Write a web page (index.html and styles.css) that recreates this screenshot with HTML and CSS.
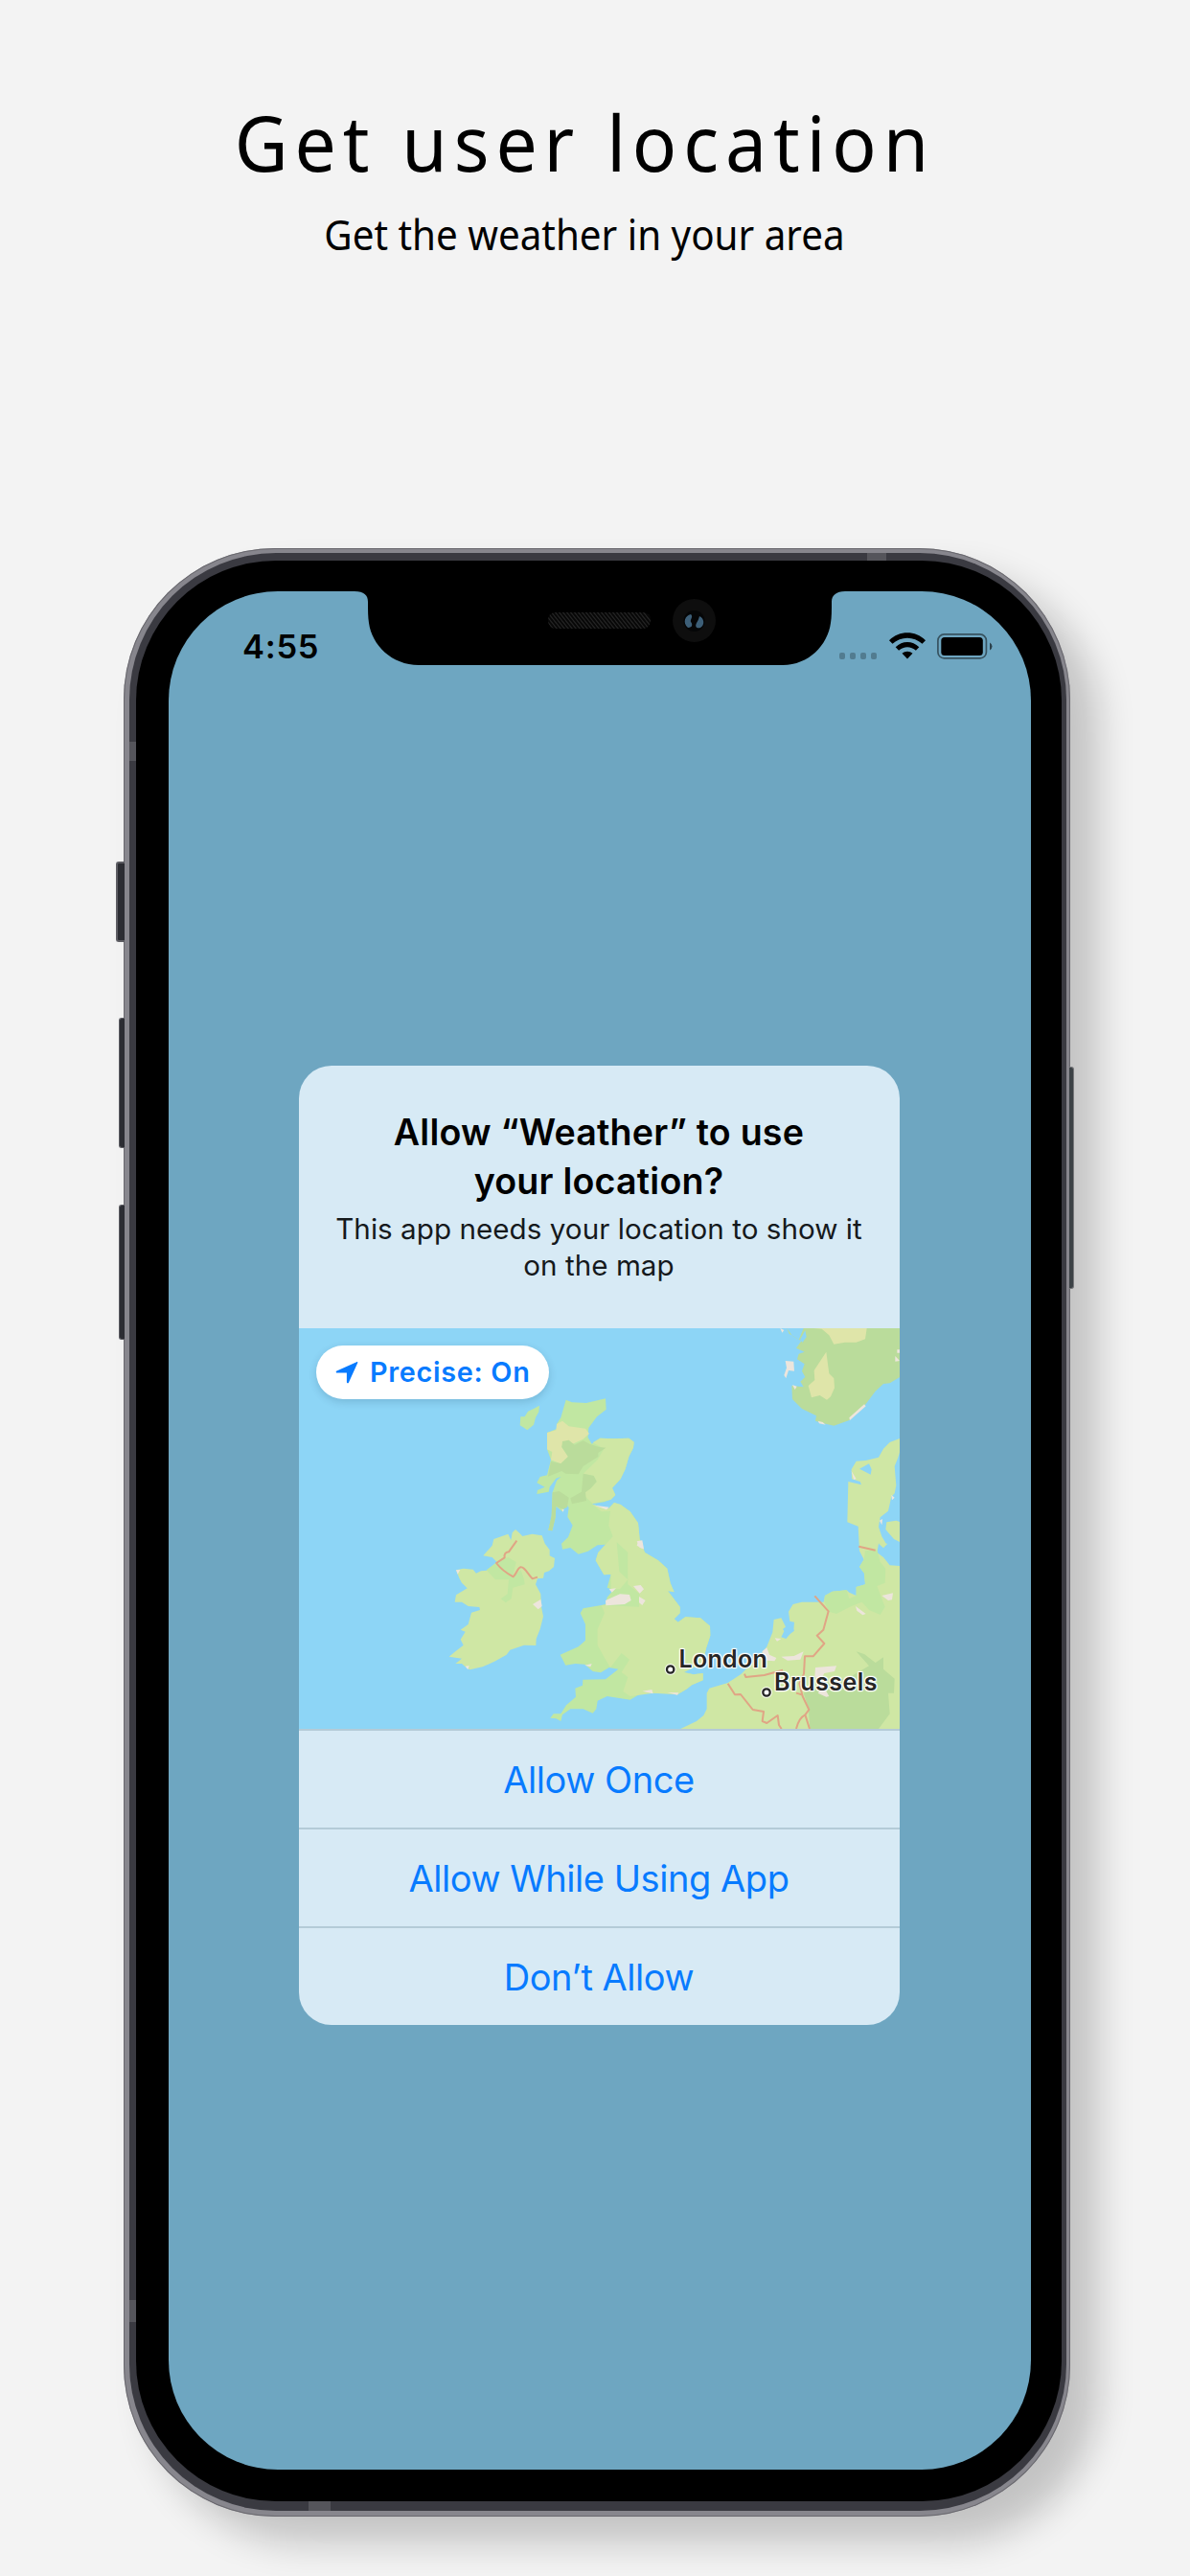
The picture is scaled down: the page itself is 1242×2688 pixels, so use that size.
FILE: index.html
```html
<!DOCTYPE html>
<html lang="en">
<head>
<meta charset="utf-8">
<title>Get user location</title>
<link rel="stylesheet" href="styles.css">
</head>
<body>
<header class="intro">
  <h1 class="intro-title">Get user location</h1>
  <p class="intro-sub">Get the weather in your area</p>
</header>
<main class="phone">
  <span class="key key-mute"></span>
  <span class="key key-up"></span>
  <span class="key key-down"></span>
  <span class="key key-power"></span>
  <div class="rail">
    <span class="band band-top"></span>
    <span class="band band-left-top"></span>
    <span class="band band-left-bottom"></span>
    <span class="band band-bottom"></span>
    <div class="bezel">
      <div class="screen">
        <svg class="notch" viewBox="0 0 500 79" aria-hidden="true">
          <defs>
            <pattern id="mesh" width="4" height="5" patternUnits="userSpaceOnUse">
              <path d="M0 0L4 5M-1 3.7L1 6.2M3 -1.2L5 1.2" stroke="#242424" stroke-width="1.1"/>
            </pattern>
          </defs>
          <path d="M0 -1V0C10 0 14 4 14 11C14 20 14 27 15 33C18 56 39 77 67 77H447C474 77 494 56 497 33C498 27 498 20 498 11C498 4 503 0 512 0V-1Z" fill="#000"/>
          <rect x="202" y="22" width="107" height="17" rx="8" fill="#070707"/>
          <rect x="202" y="22" width="107" height="17" rx="8" fill="url(#mesh)"/>
          <circle cx="354.500" cy="30.500" r="22.500" fill="#0e0e0e"/>
          <circle cx="354.500" cy="31" r="11" fill="#050607"/>
          <path d="M351 24C345 25 342 33 348 38C353 38 353 34 351 32C350 29 354 27 351 24Z" fill="#3d5f78"/>
          <path d="M360 26C365 28 366 35 361 38C357 39 355 37 357 33C359 30 359 29 360 26Z" fill="#3d5f78"/>
        </svg>
        <div class="status">
          <span class="clock">4:55</span>
          <div class="status-icons">
            <span class="dots"><i></i><i></i><i></i><i></i></span>
            <svg class="wifi" viewBox="0 0 38 28" aria-hidden="true">
              <path d="M19 27.500L13.500 21.700C16.500 19 21.500 19 24.500 21.700Z"/>
              <path d="M6.700 15.200L10.100 18.700C15.200 14 22.800 14 27.900 18.700L31.300 15.200C24.300 8.300 13.700 8.300 6.700 15.200Z"/>
              <path d="M0 8.300L3.500 11.800C12.300 3.600 25.700 3.600 34.500 11.800L38 8.300C27.300 -2.300 10.700 -2.300 0 8.300Z"/>
            </svg>
            <svg class="battery" viewBox="0 0 58 27" aria-hidden="true">
              <rect x="0.900" y="0.900" width="50.500" height="25" rx="6.500" fill="none" stroke="#000" stroke-opacity=".5" stroke-width="1.700"/>
              <rect x="4.300" y="4" width="43.500" height="19" rx="3.500"/>
              <path d="M55 9.500Q57.500 11 57.500 13.500T55 17.500Z" fill-opacity=".6"/>
            </svg>
          </div>
        </div>
        <section class="dialog">
          <div class="message">
            <h2 class="question">Allow “Weather” to use<br>your location?</h2>
            <p class="reason">This app needs your location to show it<br>on the map</p>
          </div>
          <div class="map">
            <svg class="map-art" viewBox="35 48 1881 1254" preserveAspectRatio="none" aria-hidden="true">
              <!-- Ireland and Outer Hebrides -->
              <g>
                <path fill="#c1e7a2" d="M788 290L786 310L776 328L770 350L750 367L737 358L727 352L729 325L742 325L752 308L770 300Z"/>
                <path fill="#cfe7a4" d="M713 678L724 688L735 699L765 692L796 697L805 722L820 742L820 760L836 768L833 795L818 808L803 813L800 830L782 832L776 850L792 880L794 920L800 950L790 990L778 1020L777 1041L740 1040L696 1055L685 1070L650 1090L610 1108L570 1117L556 1108L545 1098L525 1098L545 1082L505 1076L522 1062L550 1040L541 1022L556 998L541 992L565 975L575 938L602 930L600 921L565 918L545 905L523 905L527 883L562 862L545 845L537 830L527 805L550 800L580 803L590 815L605 808L625 806L655 780L640 765L612 760L640 728L645 708L690 692L699 712L703 688Z"/>
                <path fill="#c1e7a2" d="M655 780L690 765L715 780L705 822L730 805L740 835L742 850L705 860L700 895L682 907L667 895L688 880L692 835L650 835L622 805Z"/>
                <path fill="#ede5dc" d="M527 805L540 804L532 818ZM767 912L792 897L796 918L784 928ZM556 1106L568 1104L564 1117Z"/>
                <path fill="none" stroke="#e0a585" stroke-width="6" stroke-linejoin="round" d="M717 713L692 748Q676 750 679 766L653 783Q672 808 706 826C718 815 720 795 731 796C742 796 750 815 766 832L782 827"/>
              </g>
              <!-- Great Britain -->
              <g transform="translate(720 210)">
                <path fill="#c1e7a2" d="M151 62L170 70L215 72L275 58L277 92L248 115L222 150L220 180L232 200L258 182L300 184L348 182L364 194L362 212L348 240L337 278L322 310L296 338L306 360L292 374L270 382L232 388L262 400L285 402L302 384L322 390L352 412L377 448L382 498L398 540L440 565L468 590L478 636L490 664L470 660L508 710L508 730L490 748L502 758L525 742L572 745L602 770L603 800L590 840L580 885L520 915L550 922L580 918L580 940L545 955L530 967L500 985L470 978L425 980L400 973L352 1001L280 990L250 1004L246 1030L235 1043L205 1030L165 1030L140 1048L135 1068L120 1060L102 1058L112 1045L135 1045L152 1018L182 992L180 965L203 956L204 938L275 937L315 905L286 900L260 916L235 912L210 890L180 888L150 893L133 860L190 835L212 815L212 765L196 730L205 715L262 705L275 702L280 680L300 657L280 650L292 608L270 610L244 565L252 540L275 515L250 517L220 536L190 545L165 525L140 530L137 512L158 492L172 455L156 428L160 400L152 388L140 412L120 395L118 430L108 472L96 470L106 425L109 352L122 315L135 303L120 308L100 335L97 350L60 357L62 345L85 335L60 322L70 303L92 298L104 250L92 217L92 165L130 150L122 138L135 118Z"/>
                <path fill="#cfe7a4" d="M258 182L300 184L348 182L364 194L362 212L348 240L337 278L322 310L296 338L306 360L292 374L235 387L200 355L228 340L247 318L238 300L205 293L250 250L270 215L235 196ZM232 388L262 400L285 402L302 384L322 390L352 412L377 448L382 498L398 540L440 565L468 590L478 636L490 664L470 660L508 710L508 730L490 748L502 758L525 742L572 745L602 770L603 800L590 840L580 885L520 915L550 922L580 918L580 940L545 955L530 967L500 985L425 980L352 990L330 975L345 930L325 915L350 875L325 855L290 900L275 875L250 830L250 780L272 730L262 705L380 710L382 670L345 640L345 540L310 508L318 600L345 625L320 655L292 655L292 608L270 610L244 565L252 540L298 490L285 455L290 410L262 412Z"/>
                <path fill="#dfe5a9" d="M122 138L140 128L160 145L212 152L224 168L205 185L172 200L142 195L138 210L158 240L135 262L104 250L108 225L92 217L92 165L120 157Z"/>
                <path fill="#badc9b" d="M140 192L160 188L178 203L205 190L225 200L255 210L276 212L252 228L252 240L205 270L190 295L150 293L138 285L95 302L104 255L135 262L158 240L138 210ZM205 293L238 300L247 318L228 340L212 352L215 378L170 388L165 370L200 350ZM109 352L130 348L160 368L155 398L140 405L120 395L118 430L108 472L96 470L106 425Z"/>
                <path fill="#ede5dc" d="M275 690L320 670L350 672L355 690L335 702L276 706ZM286 655L308 652L295 665ZM362 645L385 642L395 655L382 668ZM380 678L400 690L390 705L380 697ZM378 505L395 530L373 518ZM240 392L286 398L278 406ZM390 974L420 969L424 982ZM210 893L232 888L228 898ZM468 978L504 979L500 986ZM138 404L142 414L145 405Z"/>
              </g>
              <!-- Norway, Denmark, Low Countries, France and Germany -->
              <g transform="translate(960 0)">
                <path fill="#badc9b" d="M603 48L620 72L640 84L655 48H958V200L925 220L905 222L880 245L845 292L800 335L750 353L715 345L692 338L695 322L650 300L620 270L618 228L655 232L645 215L660 200L650 182L658 160L635 145L640 128L658 122L632 110L648 88L610 65Z"/>
                <path fill="#8dd5f6" d="M644 84L660 55L664 75L652 92Z"/>
                <path fill="#dfe5a9" d="M688 48H853L848 82L820 92L785 92L750 98L735 70L712 50ZM726 122L735 190L750 205L752 235L740 262L728 272L706 258L680 265L670 228L690 210L688 180Z"/>
                <path fill="#ede5dc" d="M598 150L624 152L626 182L608 180L600 205L594 195L602 172ZM582 48L594 54L588 62ZM620 225L634 230L628 240ZM845 286L850 292L800 336L798 328ZM700 338L715 342L724 350L704 346ZM948 115H956V125H948ZM942 135L956 150L942 152Z"/>
                <path fill="#cfe7a4" d="M958 392L925 405L905 425L890 452L850 462L820 464L805 490L806 520L832 528L836 538L795 528L792 655L826 668L830 745L844 772L830 795L845 815L848 850L820 858L820 885L798 875L790 868L745 872L722 885L718 905L650 905L622 912L608 935L612 965L626 968L624 992L600 1020L585 1015L600 985L585 955L562 960L558 1000L540 1045L522 1068L460 1130L418 1158L360 1175L352 1190L352 1240L342 1260L320 1278L270 1302H958V792L925 790L905 765L885 750L890 722L915 725L900 700L890 670L895 640L920 620L930 575L940 565L945 540L940 480L950 455L958 430Z"/>
                <path fill="#c1e7a2" d="M848 745L885 742L895 780L912 800L910 845L885 855L910 920L895 945L860 930L838 905L820 912L800 920L758 942L735 935L720 905L722 885L745 872L790 868L798 895L820 885L820 858L848 850L845 815L830 795L844 772Z"/>
                <path fill="#badc9b" d="M820 1060L845 1068L880 1095L905 1078L905 1115L940 1145L938 1190H920L925 1255L890 1302H675L670 1235L655 1190L720 1160L800 1140L860 1105Z"/>
                <path fill="#8dd5f6" d="M830 488L860 472L868 490L865 506L842 494ZM590 990L615 970L626 995L605 1010ZM925 620L958 570V640L930 648L915 655L914 690L930 705L905 692L902 660ZM940 650L958 640V790L925 788L915 745L900 735L945 728L920 705Z"/>
                <path fill="#cfe7a4" d="M915 655L945 650L958 655V718L938 708L912 678ZM890 722L918 722L905 736Z"/>
                <path fill="#ede5dc" d="M692 1110L758 1105L752 1122L720 1128L708 1150L690 1140ZM900 885L935 877L932 898L920 900ZM818 918L850 942L840 946L822 932ZM525 1060L540 1048L548 1070L570 1080L564 1090L540 1088ZM585 1076L625 1074L655 1060L645 1085L605 1088ZM805 495L820 520L812 522ZM930 570L940 578L932 586ZM893 650L902 645L900 664ZM700 1190L718 1170L735 1200L726 1202ZM565 1018L585 1020L572 1028ZM133 715L150 712L155 738L142 735Z"/>
                <g fill="none" stroke="#e0a585" stroke-width="6" stroke-linejoin="round">
                  <path d="M690 886L733 934L717 992L697 1010L720 1035L685 1075H659L656 1130L642 1160L652 1200L672 1242L660 1258L674 1302M632 1190L652 1196M660 1258Q640 1268 632 1302M470 1130L474 1140L532 1134L590 1118M418 1160L440 1195L458 1194L496 1242L530 1248L526 1278L540 1284L574 1260L578 1290L586 1302M828 731L880 743"/>
                </g>
                <g fill="none" stroke="#fff" stroke-opacity=".8" stroke-width="12">
                  <circle cx="238" cy="1116" r="12"/>
                  <circle cx="539" cy="1188" r="12"/>
                </g>
                <g fill="#fff" stroke="#262626" stroke-width="7">
                  <circle cx="238" cy="1116" r="11"/>
                  <circle cx="539" cy="1188" r="11"/>
                </g>
              </g>
            </svg>
            <span class="precise">
              <svg class="arrow" viewBox="0 0 24 24" aria-hidden="true"><path d="M22.200 1.200C23 .8 23.600 1.400 23.200 2.300L14 22.500C13.400 23.800 11.900 23.500 11.900 22.100V12.600H2C.5 12.500 .2 11 1.500 10.400Z"/></svg>
              <span class="precise-text">Precise: On</span>
            </span>
            <span class="city city-london">London</span>
            <span class="city city-brussels">Brussels</span>
          </div>
          <button class="choice">Allow Once</button>
          <button class="choice">Allow While Using App</button>
          <button class="choice">Don’t Allow</button>
        </section>
      </div>
    </div>
  </div>
</main>
</body>
</html>
```
FILE: styles.css
```css
* { box-sizing: border-box; }

body {
  margin: 0;
  width: 1242px;
  height: 2688px;
  overflow: hidden;
  background: #f3f3f3;
  color: #000;
  font-family: Inter, "Liberation Sans", sans-serif;
}

.intro {
  height: 572px;
  padding-top: 93px;
  padding-right: 24px;
  text-align: center;
  font-family: "Noto Sans", "Open Sans", sans-serif;
}
.intro-title {
  margin: 0;
  padding-left: 3px;
  font-size: 80px;
  line-height: 110px;
  font-weight: 400;
  letter-spacing: 7.200px;
  transform: scaleX(.96);
}
.intro-sub {
  margin: 11px 0 0;
  padding-left: 2px;
  font-size: 44px;
  line-height: 60px;
  font-weight: 400;
  transform: scaleX(.917);
}

.phone {
  position: relative;
  width: 988px;
  height: 2054px;
  margin-left: 129px;
  padding: 5px 4px 6px 6px;
  border-radius: 158px;
  background: #87868d;
  box-shadow: inset 0 0 0 1px #69686e, 29px 27px 38px rgba(0, 0, 0, .2);
}
.rail {
  position: relative;
  height: 100%;
  padding: 8px 5px 10px 7px;
  border-radius: 153px;
  background: #3a3a41;
}
.bezel {
  position: relative;
  height: 100%;
  padding: 32px 32.500px 33px 33.500px;
  border-radius: 146px;
  background: #000;
}
.screen {
  position: relative;
  height: 100%;
  overflow: hidden;
  border-radius: 114px;
  background: #6ea6c1;
}

.key {
  position: absolute;
  left: -5px;
  width: 6px;
  border: 1px solid #5c5c62;
  border-right: 0;
  border-radius: 3px 0 0 3px;
  background: #2c2d33;
}
.key-mute { left: -8px; width: 9px; top: 327px; height: 84px; border-width: 2px; border-right: 0; }
.key-up { top: 490px; height: 136px; }
.key-down { top: 685px; height: 141px; }
.key-power {
  left: 987px;
  width: 5px;
  top: 541px;
  height: 232px;
  border: 1px solid #77787b;
  border-left: 0;
  border-radius: 0 3px 3px 0;
  background: #3c4246;
}
.band { position: absolute; background: #55555b; }
.band-top { left: 770px; top: 0; width: 20px; height: 8px; }
.band-left-top { left: 0; top: 197px; width: 7px; height: 20px; }
.band-left-bottom { left: 0; bottom: 197px; width: 7px; height: 23px; }
.band-bottom { left: 187px; bottom: 0; width: 23px; height: 10px; }

.notch {
  position: absolute;
  left: 194.500px;
  top: 0;
  width: 500px;
  height: 79px;
  overflow: visible;
}

.status {
  display: flex;
  justify-content: space-between;
  align-items: flex-end;
  height: 77px;
  padding: 0 39.500px 6px 77.500px;
}
.clock {
  margin-bottom: -4px;
  font-size: 34.500px;
  line-height: 34px;
  font-weight: 600;
  letter-spacing: .7px;
}
.status-icons { display: flex; align-items: flex-end; }
.dots { display: flex; gap: 4.500px; margin-right: 13px; }
.dots i {
  width: 6.500px;
  height: 7px;
  border-radius: 2px;
  background: rgba(0, 0, 0, .25);
}
.wifi { width: 38px; height: 28px; margin-right: 12px; }
.battery { width: 58px; height: 27px; }

.dialog {
  width: 627px;
  height: 1001px;
  margin: 418px 0 0 136px;
  overflow: hidden;
  border-radius: 34px;
  background: #d7eaf5;
}
.message {
  height: 274px;
  padding-top: 44px;
  text-align: center;
}
.question {
  margin: 0;
  font-size: 37.600px;
  line-height: 51px;
  font-weight: 600;
  letter-spacing: .22px;
}
.reason {
  margin: 6px 0 0;
  color: #15191c;
  font-size: 29.600px;
  line-height: 37.500px;
  letter-spacing: .04px;
  white-space: nowrap;
}
.map {
  position: relative;
  height: 418px;
  background: #8dd5f6;
}
.map-art { display: block; width: 627px; height: 418px; }
.precise {
  position: absolute;
  left: 18px;
  top: 18px;
  display: flex;
  align-items: center;
  width: 243.500px;
  height: 55.500px;
  padding-left: 20px;
  gap: 12.500px;
  border-radius: 28px;
  background: #fff;
  color: #087bff;
  box-shadow: 0 3px 9px rgba(0, 40, 70, .16);
  font-size: 28.800px;
  font-weight: 600;
  letter-spacing: .7px;
  white-space: nowrap;
}
.arrow { width: 24px; height: 24px; fill: #087bff; }
.city {
  position: absolute;
  color: #262626;
  font-size: 25px;
  line-height: 30px;
  font-weight: 600;
  text-shadow: 0 0 2px #fff, 0 0 2px #fff, 1px 1px 1px #fff, -1px -1px 1px #fff, 1px -1px 1px #fff, -1px 1px 1px #fff;
}
.city-london { left: 397px; top: 330px; letter-spacing: .3px; }
.city-brussels { left: 496.500px; top: 354px; letter-spacing: .45px; }

.choice {
  display: block;
  width: 100%;
  height: 103px;
  padding: 0;
  border: 0;
  border-top: 2px solid #b4cbd7;
  background: none;
  color: #087bff;
  font-family: inherit;
  font-size: 38px;
  letter-spacing: -.45px;
  text-align: center;
}
```
